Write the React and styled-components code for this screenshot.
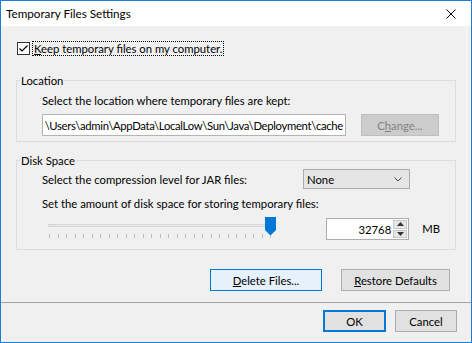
import React from 'react';
import styled, { createGlobalStyle } from 'styled-components';

const Global = createGlobalStyle`
  html, body { margin: 0; padding: 0; background: #fff; }
  body { font-family: Lato, "Liberation Sans", sans-serif; font-size: 11.3px; color: #000; }
  *, *::before, *::after { box-sizing: border-box; }
`;

const Frame = styled.div`
  width: 472px;
  height: 343px;
  border: 1px solid #1a7fd4;
  display: flex;
  flex-direction: column;
  background: #f0f0f0;
`;

const TitleBar = styled.div`
  flex: none;
  height: 25px;
  background: #fff;
  display: flex;
  align-items: center;
  justify-content: space-between;
  padding: 0 15px 0 5px;
`;

const Title = styled.span`
  font-size: 11.7px;
  line-height: 15px;
`;

const CloseIcon = styled.svg`
  width: 10px;
  height: 10px;
  display: block;
`;

const Panel = styled.div`
  flex: none;
  margin: 0 4px;
  border-left: 1px solid #f6eeea;
  border-right: 1px solid #f9f9f9;
  padding: 16px 10px 11px 10px;
  display: flex;
  flex-direction: column;
`;

const CheckRow = styled.label`
  display: flex;
  align-items: center;
  height: 13px;
  margin-left: 1px;
`;

const CheckBox = styled.span`
  width: 13px;
  height: 13px;
  border: 1px solid #333;
  background: #fff;
  display: flex;
  align-items: center;
  justify-content: center;
  margin-right: 2px;
`;

const FocusLabel = styled.span`
  border: 1px dotted #000;
  padding: 0 1px;
  line-height: 13px;
  height: 15px;
  display: flex;
  align-items: center;
`;

const Group = styled.div`
  position: relative;
  border: 1px solid #dcdcdc;
  margin-top: ${p => p.$mt}px;
  padding: ${p => p.$pad};
  display: flex;
  flex-direction: column;
`;

const Legend = styled.span`
  position: absolute;
  top: -8px;
  left: 3px;
  padding: 0 1px;
  line-height: 15px;
  background: #f0f0f0;
`;

const Text = styled.div`
  line-height: 15px;
  height: 15px;
  margin-top: ${p => p.$mt || 0}px;
  white-space: nowrap;
  flex: none;
  width: ${p => (p.$w ? `${p.$w}px` : 'auto')};
`;

const Row = styled.div`
  display: flex;
  align-items: ${p => p.$align || 'center'};
  height: ${p => p.$h}px;
  margin-top: ${p => p.$mt || 0}px;
  gap: ${p => p.$gap || 0}px;
`;

const PathField = styled.div`
  width: 304px;
  height: 22px;
  border: 1px solid #b4b4b4;
  background: #fff;
  display: flex;
  align-items: center;
  justify-content: flex-end;
  overflow: hidden;
  white-space: nowrap;
  padding-right: 2px;
`;

const PathText = styled.span`
  flex: none;
  letter-spacing: -0.32px;
`;

const Button = styled.div`
  width: ${p => p.$w}px;
  height: 22px;
  display: flex;
  align-items: center;
  justify-content: center;
  white-space: nowrap;
  background: ${p => (p.$disabled ? '#cccccc' : p.$hot ? '#e5f1fb' : '#e1e1e1')};
  border: 1px solid ${p => (p.$disabled ? '#bfbfbf' : p.$hot || p.$default ? '#0078d7' : '#adadad')};
  box-shadow: ${p => (p.$default ? 'inset 0 0 0 1px #0078d7' : 'none')};
  color: ${p => (p.$disabled ? '#838383' : '#000')};
`;

const Select = styled.div`
  width: 107px;
  height: 20px;
  background: #e5e5e5;
  border: 1px solid #acacac;
  display: flex;
  align-items: center;
  justify-content: space-between;
  padding: 0 7px 0 3px;
`;

const SliderSvg = styled.svg`
  width: 240px;
  height: 26px;
  display: block;
  flex: none;
`;

const Spinner = styled.div`
  width: 85px;
  height: 22px;
  margin: 3px 0 0 44px;
  border: 1px solid #abadb3;
  background: #fff;
  display: flex;
`;

const SpinValue = styled.div`
  flex: 1;
  display: flex;
  align-items: center;
  justify-content: flex-end;
  padding-right: 2px;
`;

const SpinButtons = styled.div`
  width: 15px;
  display: flex;
  flex-direction: column;
  gap: 1px;
  padding: 1px 1px 1px 0;
`;

const SpinHalf = styled.div`
  flex: 1;
  background: #e6e6e6;
  border: 1px solid #c8c8c8;
  display: flex;
  align-items: center;
  justify-content: center;
`;

const Unit = styled.span`
  margin-left: 13px;
  align-self: center;
  line-height: 15px;
`;

const ButtonRow = styled.div`
  display: flex;
  justify-content: flex-end;
  gap: 19px;
  margin-top: 19px;
  padding-right: 6px;
`;

const Footer = styled.div`
  flex: 1;
  border-top: 1px solid #a0a0a0;
  display: flex;
  justify-content: flex-end;
  align-items: flex-start;
  gap: 9px;
  padding: 7px 14px 0 0;
`;

function Slider() {
  const ticks = [];
  const n = 27;
  for (let i = 0; i < n; i++) {
    const x = Math.round(7 + (i * 221) / (n - 1)) + 0.5;
    ticks.push(<line key={i} x1={x} x2={x} y1={19} y2={23} stroke="#bdbdbd" strokeWidth="1" />);
  }
  return (
    <SliderSvg viewBox="0 0 240 26" shapeRendering="crispEdges">
      <rect x="6.5" y="9.5" width="224" height="2" fill="#e7eaea" stroke="#d6d6d6" />
      {ticks}
      <path d="M223 2 H234 V15 L228.5 20.5 L223 15 Z" fill="#0078d7" shapeRendering="geometricPrecision" />
    </SliderSvg>
  );
}

export default function App() {
  return (
    <>
      <Global />
      <Frame>
        <TitleBar>
          <Title>Temporary Files Settings</Title>
          <CloseIcon viewBox="0 0 10 10">
            <path d="M0.5 0.5 L9.5 9.5 M9.5 0.5 L0.5 9.5" stroke="#000" strokeWidth="1" fill="none" />
          </CloseIcon>
        </TitleBar>
        <Panel>
          <CheckRow>
            <CheckBox>
              <svg width="11" height="11" viewBox="0 0 11 11">
                <path d="M1.5 5.5 L4 8 L9.5 2.5" stroke="#000" strokeWidth="1.2" fill="none" />
              </svg>
            </CheckBox>
            <FocusLabel><span><u>K</u>eep temporary files on my computer.</span></FocusLabel>
          </CheckRow>

          <Group $mt={25} $pad="12px 15px 5px 25px">
            <Legend>Location</Legend>
            <Text>Select the location where temporary files are kept:</Text>
            <Row $h={22} $mt={6} $gap={15}>
              <PathField>
                <PathText>\Users\admin\AppData\LocalLow\Sun\Java\Deployment\cache</PathText>
              </PathField>
              <Button $w={78} $disabled>C<u>h</u>ange...</Button>
            </Row>
          </Group>

          <Group $mt={18} $pad="8px 15px 8px 25px">
            <Legend>Disk Space</Legend>
            <Row $h={20}>
              <Text $w={261}>Select the compression level for JAR files:</Text>
              <Select>
                <span>None</span>
                <svg width="8" height="5" viewBox="0 0 8 5">
                  <path d="M0.5 0.5 L4 4 L7.5 0.5" stroke="#444" strokeWidth="1" fill="none" />
                </svg>
              </Select>
            </Row>
            <Text $mt={7}>Set the amount of disk space for storing temporary files:</Text>
            <Row $h={26} $mt={4} $align="flex-start">
              <Slider />
              <Spinner>
                <SpinValue>32768</SpinValue>
                <SpinButtons>
                  <SpinHalf>
                    <svg width="7" height="4" viewBox="0 0 7 4"><path d="M0 4 L3.5 0 L7 4 Z" fill="#333" /></svg>
                  </SpinHalf>
                  <SpinHalf>
                    <svg width="7" height="4" viewBox="0 0 7 4"><path d="M0 0 L3.5 4 L7 0 Z" fill="#333" /></svg>
                  </SpinHalf>
                </SpinButtons>
              </Spinner>
              <Unit>MB</Unit>
            </Row>
          </Group>

          <ButtonRow>
            <Button $w={112} $hot><span><u>D</u>elete Files...</span></Button>
            <Button $w={109}><span><u>R</u>estore Defaults</span></Button>
          </ButtonRow>
        </Panel>
        <Footer>
          <Button $w={63} $default>OK</Button>
          <Button $w={62}>Cancel</Button>
        </Footer>
      </Frame>
    </>
  );
}
